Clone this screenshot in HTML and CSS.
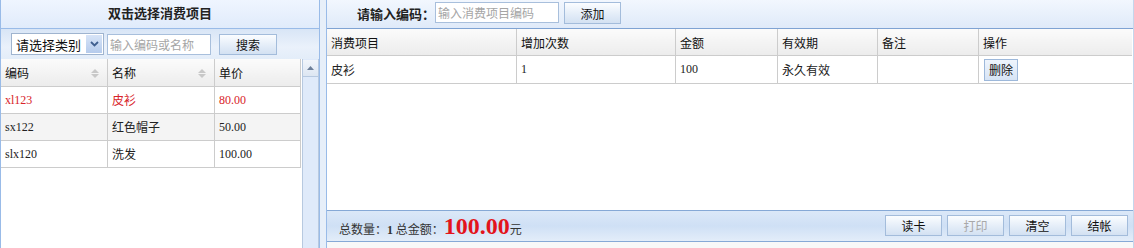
FILE: index.html
```html
<!DOCTYPE html>
<html lang="zh-CN">
<head>
    <meta charset="UTF-8">
    <title>消费项目</title>
    <link rel="stylesheet" href="styles.css">
</head>
<body>
<div class="page">

    <!-- left: item picker -->
    <div class="side">
        <div class="side-title">双击选择消费项目</div>
        <div class="side-tools">
            <div class="combo">
                <span class="combo-text">请选择类别</span>
                <span class="combo-arrow">
                    <svg width="9" height="6" viewBox="0 0 9 6"><path d="M1 1 L4.5 4.5 L8 1" fill="none" stroke="#3f5f8f" stroke-width="1.8"/></svg>
                </span>
            </div>
            <input class="field field-search" type="text" placeholder="输入编码或名称">
            <button class="btn btn-search">搜索</button>
        </div>
        <div class="side-grid">
            <table class="grid grid-items">
                <tr class="grid-head">
                    <th class="c-code">编码<span class="sort"></span></th>
                    <th class="c-name">名称<span class="sort"></span></th>
                    <th class="c-price">单价</th>
                </tr>
                <tr class="picked">
                    <td>xl123</td>
                    <td>皮衫</td>
                    <td>80.00</td>
                </tr>
                <tr class="alt">
                    <td>sx122</td>
                    <td>红色帽子</td>
                    <td>50.00</td>
                </tr>
                <tr>
                    <td>slx120</td>
                    <td>洗发</td>
                    <td>100.00</td>
                </tr>
            </table>
            <div class="vscroll">
                <div class="vscroll-up">
                    <svg width="7" height="4" viewBox="0 0 7 4"><path d="M0 4 L3.5 0 L7 4 Z" fill="#6d7f99"/></svg>
                </div>
            </div>
        </div>
    </div>

    <div class="splitter"></div>

    <!-- right: current order -->
    <div class="main">
        <div class="main-tools">
            <span class="tools-label">请输入编码：</span>
            <input class="field field-code" type="text" placeholder="输入消费项目编码">
            <button class="btn btn-add">添加</button>
        </div>
        <div class="main-grid">
            <table class="grid grid-order">
                <tr class="grid-head">
                    <th class="o-item">消费项目</th>
                    <th class="o-times">增加次数</th>
                    <th class="o-amount">金额</th>
                    <th class="o-valid">有效期</th>
                    <th class="o-note">备注</th>
                    <th class="o-op">操作</th>
                </tr>
                <tr class="order-row">
                    <td>皮衫</td>
                    <td>1</td>
                    <td>100</td>
                    <td>永久有效</td>
                    <td></td>
                    <td><button class="btn btn-del">删除</button></td>
                </tr>
            </table>
        </div>
        <div class="main-foot">
            <div class="totals">
                总数量：<b>1</b> 总金额：<span class="total-money">100.00</span>元
            </div>
            <div class="foot-btns">
                <button class="btn btn-foot">读卡</button>
                <button class="btn btn-foot" disabled>打印</button>
                <button class="btn btn-foot">清空</button>
                <button class="btn btn-foot">结帐</button>
            </div>
        </div>
        <div class="main-bottom"></div>
    </div>

</div>
</body>
</html>
```

FILE: styles.css
```css
body {
    margin: 0;
    font-family: "Liberation Serif", "Noto Sans CJK SC", serif;
    font-size: 12px;
    color: #222;
    background: #fff;
}
.page {
    display: flex;
    height: 248px;
    overflow: hidden;
}

/* ---- left panel ---- */
.side {
    width: 318px;
    border-left: 1px solid #99bbe8;
    border-right: 1px solid #99bbe8;
    display: flex;
    flex-direction: column;
}
.side-title {
    height: 28px;
    line-height: 26px;
    text-align: center;
    font-family: "Noto Sans CJK SC", sans-serif;
    font-weight: bold;
    font-size: 13px;
    color: #222;
    background: linear-gradient(#eff5ff, #e0ebfb);
    border-bottom: 1px solid #99bbe8;
}
.side-tools {
    height: 30px;
    display: flex;
    align-items: center;
    padding-left: 10px;
    background: linear-gradient(#d8e5f6, #eaf1fb 60%, #e3edf9);
}
.combo {
    width: 91px;
    height: 20px;
    border: 1px solid #9fb4cf;
    background: #fff;
    display: flex;
    align-items: center;
    justify-content: space-between;
}
.combo-text {
    font-family: "Noto Sans CJK SC", sans-serif;
    font-size: 13px;
    padding-left: 4px;
    color: #111;
}
.combo-arrow {
    width: 16px;
    height: 18px;
    margin-right: 1px;
    display: flex;
    align-items: center;
    justify-content: center;
    background: linear-gradient(#d7e4f7, #b5cbec);
}
.field {
    box-sizing: border-box;
    height: 21px;
    margin: 0;
    padding: 0 2px;
    border: 1px solid #a8bfdc;
    font-family: "Noto Sans CJK SC", sans-serif;
    font-size: 12px;
    outline: none;
}
.field::placeholder {
    color: #a5a5a5;
}
.field-search {
    width: 104px;
    margin-left: 3px;
}
.btn {
    box-sizing: border-box;
    height: 21px;
    margin: 0;
    padding: 0;
    border: 1px solid #a3bcdb;
    background: linear-gradient(#fbfdff, #e4edf8 55%, #d3e1f2);
    font-family: "Noto Sans CJK SC", sans-serif;
    font-size: 12px;
    color: #111;
}
.btn:disabled {
    color: #a8a8a8;
}
.btn-search {
    width: 58px;
    margin-left: 8px;
}

/* ---- grids ---- */
.grid {
    border-collapse: collapse;
    table-layout: fixed;
}
.grid th,
.grid td {
    padding: 0 0 0 4px;
    text-align: left;
    white-space: nowrap;
    border-right: 1px solid #ccc;
    border-bottom: 1px solid #ccc;
}
.grid th {
    height: 27px;
    font-weight: normal;
    font-family: "Noto Sans CJK SC", sans-serif;
    color: #111;
    background: linear-gradient(#fbfbfb, #ececec);
}
.grid td {
    height: 26px;
}
.side-grid {
    flex: 1;
    display: flex;
    align-items: flex-start;
}
.grid-items {
    width: 301px;
}
.grid-items .c-code { width: 102px; }
.grid-items .c-name { width: 102px; }
.grid-items th,
.grid-items td {
    position: relative;
}
.grid-items tr.picked td {
    color: #d8242a;
}
.grid-items tr.alt td {
    background: #f4f4f4;
}
.sort {
    position: absolute;
    right: 8px;
    top: 10px;
    width: 0;
    height: 0;
    border-left: 4px solid transparent;
    border-right: 4px solid transparent;
    border-bottom: 4px solid #c8c8c8;
}
.sort::after {
    content: "";
    position: absolute;
    left: -4px;
    top: 5px;
    border-left: 4px solid transparent;
    border-right: 4px solid transparent;
    border-top: 4px solid #c8c8c8;
}
.vscroll {
    align-self: stretch;
    width: 15px;
    margin-left: 1px;
    border-left: 1px solid #b7c9e0;
    border-right: 1px solid #b7c9e0;
    background: #dfeafa;
}
.vscroll-up {
    height: 16px;
    margin-top: 1px;
    border-bottom: 1px solid #b7c9e0;
    background: linear-gradient(#f1f5fb, #dde6f2);
    display: flex;
    align-items: center;
    justify-content: center;
}

.splitter {
    width: 6px;
    background: #e7eff9;
}

/* ---- right panel ---- */
.main {
    flex: 1;
    border-left: 1px solid #99bbe8;
    border-right: 1px solid #c5d6ec;
    display: flex;
    flex-direction: column;
}
.main-tools {
    height: 26px;
    padding: 2px 0 0 30px;
    display: flex;
    align-items: flex-start;
    border-bottom: 1px solid #7fa3d3;
    background: linear-gradient(#f2f7fe, #dfeaf9);
}
.tools-label {
    font-family: "Noto Sans CJK SC", sans-serif;
    font-weight: bold;
    font-size: 13px;
    line-height: 24px;
    width: 78px;
    color: #222;
}
.field-code {
    width: 124px;
}
.btn-add {
    width: 57px;
    height: 22px;
    margin-left: 5px;
}
.main-grid {
    flex: 1;
}
.grid-order {
    width: 805px;
}
.grid-order .o-item { width: 185px; }
.grid-order .o-times { width: 154px; }
.grid-order .o-amount { width: 97px; }
.grid-order .o-valid { width: 95px; }
.grid-order .o-note { width: 96px; }
.grid-order th:last-child,
.grid-order td:last-child {
    border-right: none;
}
.grid-order th {
    height: 26px;
}
.order-row td {
    height: 27px;
    border-top: 1px solid #f3f3d6;
}
.order-row td:first-child {
    font-family: "Noto Sans CJK SC", sans-serif;
}
.btn-del {
    width: 34px;
    height: 22px;
    margin-left: 1px;
    border-color: #9db8da;
    background: linear-gradient(#eef4fc, #d7e4f5);
}
.main-foot {
    height: 30px;
    display: flex;
    justify-content: space-between;
    border-top: 1px solid #86a9d6;
    border-bottom: 1px solid #86a9d6;
    background: linear-gradient(#dbe8f8, #cfe0f5 50%, #e3edf9);
}
.totals {
    padding: 2px 0 0 12px;
    line-height: 26px;
    font-family: "Noto Sans CJK SC", sans-serif;
    color: #333;
}
.totals b {
    font-family: "Liberation Serif", serif;
}
.total-money {
    font-family: "Liberation Serif", serif;
    font-weight: bold;
    font-size: 24px;
    color: #e3141b;
}
.foot-btns {
    display: flex;
    gap: 5px;
    padding: 4px 5px 0 0;
}
.btn-foot {
    width: 57px;
    height: 21px;
}
.main-bottom {
    height: 6px;
    background: #f8f8f8;
}
```
